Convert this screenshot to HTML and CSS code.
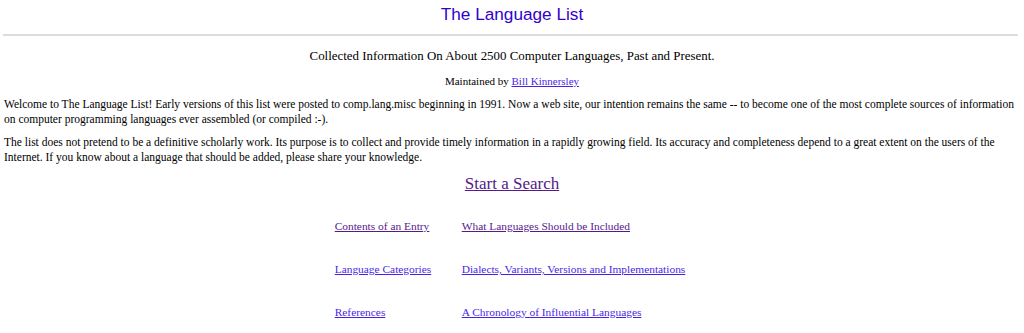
FILE: index.html
```html
<!DOCTYPE html>
<html lang="en">
<head>
    <meta charset="UTF-8">
    <title>The Language List</title>
    <link rel="stylesheet" href="styles.css">
</head>
<body>
    <h1 class="title">The Language List</h1>
    <hr class="rule">

    <p class="subtitle">Collected Information On About 2500 Computer Languages, Past and Present.</p>
    <p class="maintainer">Maintained by <a href="#" class="link">Bill Kinnersley</a></p>

    <p class="intro">Welcome to The Language List! Early versions of this list were posted to comp.lang.misc beginning in 1991. Now a web site, our intention remains the same -- to become one of the most complete sources of information on computer programming languages ever assembled (or compiled :-).</p>
    <p class="intro">The list does not pretend to be a definitive scholarly work. Its purpose is to collect and provide timely information in a rapidly growing field. Its accuracy and completeness depend to a great extent on the users of the Internet. If you know about a language that should be added, please share your knowledge.</p>

    <p class="search"><a href="#" class="visited">Start a Search</a></p>

    <div class="topics">
        <a href="#" class="visited">Contents of an Entry</a>
        <a href="#" class="visited">What Languages Should be Included</a>
        <a href="#" class="link">Language Categories</a>
        <a href="#" class="link">Dialects, Variants, Versions and Implementations</a>
        <a href="#" class="link">References</a>
        <a href="#" class="link">A Chronology of Influential Languages</a>
    </div>
</body>
</html>
```

FILE: styles.css
```css
body {
    margin: 0;
    padding: 0 4px;
    font-family: "Liberation Serif", "Times New Roman", serif;
    font-size: 11.5px;
    line-height: 15px;
    color: #000;
    background-color: #fff;
}
.title {
    margin: 2px 0 0;
    font-family: "Liberation Sans", Arial, sans-serif;
    font-size: 17.2px;
    font-weight: normal;
    line-height: 24px;
    text-align: center;
    color: #3300cc;
}
.rule {
    height: 2px;
    margin: 8px 2px 0 -1px;
    border: none;
    background-color: #dcdcdc;
}
.subtitle {
    margin: 11px 0 0;
    font-size: 12.9px;
    line-height: 18px;
    text-align: center;
}
.maintainer {
    margin: 9px 0 0;
    font-size: 11px;
    text-align: center;
}
.intro {
    margin: 8px 0 0;
}
.search {
    margin: 8px 0 0;
    font-size: 17px;
    line-height: 21px;
    text-align: center;
}
.link {
    color: #4b1fe6;
}
.visited {
    color: #551a8b;
}
.topics {
    display: grid;
    grid-template-columns: 127px auto;
    grid-auto-rows: 43px;
    align-items: center;
    justify-content: center;
    margin: 11px 4px 0 0;
    font-size: 11.4px;
}
```
